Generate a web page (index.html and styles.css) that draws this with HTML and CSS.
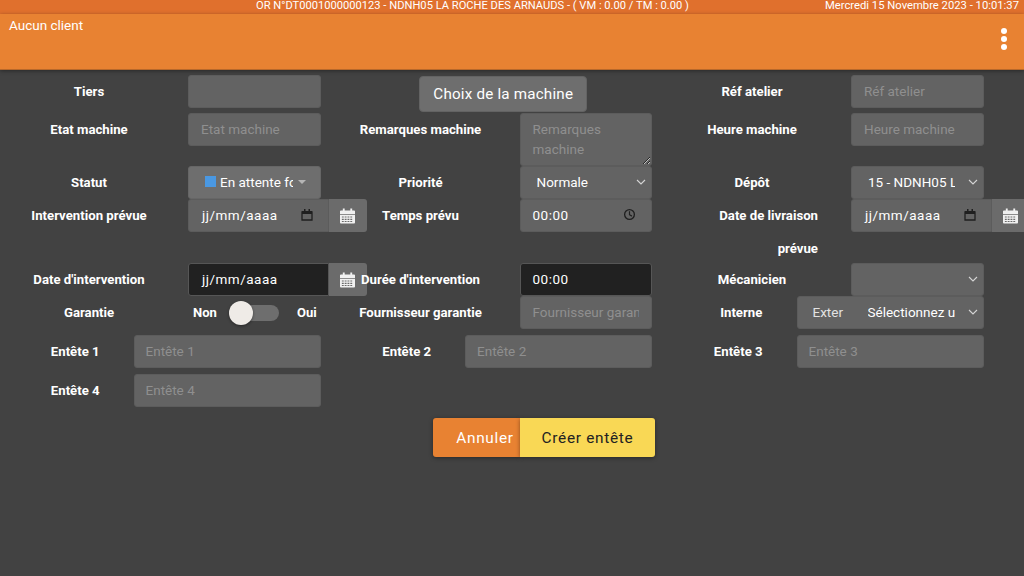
FILE: index.html
```html
<!DOCTYPE html>
<html lang="fr">
<head>
<meta charset="UTF-8">
<meta name="viewport" content="width=device-width, initial-scale=1.0">
<title>Création entête</title>
<link rel="stylesheet" href="styles.css">
</head>
<body>

<svg class="icon-defs" width="0" height="0">
    <symbol id="cal-solid" viewBox="0 0 16 16">
        <path fill="currentColor" d="M3 0h2v2h6V0h2v2h2a1 1 0 0 1 1 1v3H0V3a1 1 0 0 1 1-1h2zM0 7h16v8a1 1 0 0 1-1 1H1a1 1 0 0 1-1-1zm2 1.5v1.2h2V8.500zm3 0v1.2h2V8.500zm3 0v1.2h2V8.500zm3 0v1.2h2V8.500zM2 11v1.200h2V11zm3 0v1.200h2V11zm3 0v1.200h2V11zm3 0v1.200h2V11zM2 13.300v1.200h2v-1.200zm3 0v1.200h2v-1.200zm3 0v1.200h2v-1.200zm3 0v1.200h2v-1.200z" fill-rule="evenodd"/>
    </symbol>
    <symbol id="cal-line" viewBox="0 0 12 12">
        <path fill="none" stroke="currentColor" stroke-width="1.300" d="M1 3h10v8H1z"/>
        <path fill="currentColor" d="M1 2h10v3H1zM3 0h1.500v2H3zM7.500 0H9v2H7.500z"/>
    </symbol>
    <symbol id="chevron" viewBox="0 0 10 6">
        <path fill="none" stroke="currentColor" stroke-width="1.100" d="M1 1l4 4 4-4"/>
    </symbol>
</svg>

<div class="top-bar">
    <span class="top-title">OR N°DT0001000000123 - NDNH05 LA ROCHE DES ARNAUDS - ( VM : 0.00 / TM : 0.00 )</span>
    <span class="top-date">Mercredi 15 Novembre 2023 - 10:01:37</span>
</div>

<header class="app-bar">
    <span class="client">Aucun client</span>
    <div class="menu-dots"><i></i><i></i><i></i></div>
</header>

<main class="form">
    <div class="row row-first">
        <div class="field">
            <label class="label">Tiers</label>
            <input class="input" type="text">
        </div>
        <div class="field field-center">
            <button class="machine-button">Choix de la machine</button>
        </div>
        <div class="field">
            <label class="label">Réf atelier</label>
            <input class="input" type="text" placeholder="Réf atelier">
        </div>
    </div>

    <div class="row row-notes">
        <div class="field">
            <label class="label">Etat machine</label>
            <input class="input" type="text" placeholder="Etat machine">
        </div>
        <div class="field">
            <label class="label">Remarques machine</label>
            <textarea class="input textarea" placeholder="Remarques machine"></textarea>
        </div>
        <div class="field">
            <label class="label">Heure machine</label>
            <input class="input" type="text" placeholder="Heure machine">
        </div>
    </div>

    <div class="row">
        <div class="field">
            <label class="label">Statut</label>
            <div class="input status">
                <span class="status-square"></span>
                <span class="clip status-text">En attente fournisseur</span>
                <span class="caret"></span>
            </div>
        </div>
        <div class="field">
            <label class="label">Priorité</label>
            <div class="input select">
                <span class="clip select-text">Normale</span>
                <svg class="chevron"><use href="#chevron"/></svg>
            </div>
        </div>
        <div class="field">
            <label class="label">Dépôt</label>
            <div class="input select">
                <span class="clip select-text">15 - NDNH05 LA ROCHE DES ARNAUDS</span>
                <svg class="chevron"><use href="#chevron"/></svg>
            </div>
        </div>
    </div>

    <div class="row row-tall">
        <div class="field">
            <label class="label">Intervention prévue</label>
            <div class="date-group">
                <div class="input date-input">
                    <span class="date-text">jj/mm/aaaa</span>
                    <svg class="cal-line"><use href="#cal-line"/></svg>
                </div>
                <span class="date-addon"><svg class="cal-solid"><use href="#cal-solid"/></svg></span>
            </div>
        </div>
        <div class="field">
            <label class="label">Temps prévu</label>
            <div class="input time-input">
                <span class="date-text">00:00</span>
                <svg class="clock" viewBox="0 0 12 12">
                    <circle cx="6" cy="6" r="4.500" fill="none" stroke="currentColor" stroke-width="1.200"/>
                    <path d="M6 3v3.200l2.200 1.300" fill="none" stroke="currentColor" stroke-width="1.100"/>
                </svg>
            </div>
        </div>
        <div class="field">
            <label class="label label-right">Date de livraison prévue</label>
            <div class="date-group">
                <div class="input date-input">
                    <span class="date-text">jj/mm/aaaa</span>
                    <svg class="cal-line"><use href="#cal-line"/></svg>
                </div>
                <span class="date-addon"><svg class="cal-solid"><use href="#cal-solid"/></svg></span>
            </div>
        </div>
    </div>

    <div class="row">
        <div class="field">
            <label class="label">Date d'intervention</label>
            <div class="date-group">
                <div class="input date-input input-dark">
                    <span class="date-text">jj/mm/aaaa</span>
                </div>
                <span class="date-addon"><svg class="cal-solid"><use href="#cal-solid"/></svg></span>
            </div>
        </div>
        <div class="field">
            <label class="label label-over">Durée d'intervention</label>
            <div class="input time-input input-dark">
                <span class="date-text">00:00</span>
            </div>
        </div>
        <div class="field">
            <label class="label">Mécanicien</label>
            <div class="input select">
                <span class="clip select-text"></span>
                <svg class="chevron"><use href="#chevron"/></svg>
            </div>
        </div>
    </div>

    <div class="row row-gap">
        <div class="field">
            <label class="label">Garantie</label>
            <div class="switch-box">
                <span class="switch-text">Non</span>
                <span class="switch"><span class="switch-thumb"></span></span>
                <span class="switch-text switch-yes">Oui</span>
            </div>
        </div>
        <div class="field">
            <label class="label">Fournisseur garantie</label>
            <input class="input" type="text" placeholder="Fournisseur garantie">
        </div>
        <div class="field field-wide">
            <label class="label label-intern">Interne</label>
            <div class="input select intern">
                <span class="intern-text">Exter</span>
                <span class="clip select-text">Sélectionnez un mécanicien</span>
                <svg class="chevron"><use href="#chevron"/></svg>
            </div>
        </div>
    </div>

    <div class="row row-gap">
        <div class="field field-wide">
            <label class="label">Entête 1</label>
            <input class="input" type="text" placeholder="Entête 1">
        </div>
        <div class="field field-wide">
            <label class="label">Entête 2</label>
            <input class="input" type="text" placeholder="Entête 2">
        </div>
        <div class="field field-wide">
            <label class="label">Entête 3</label>
            <input class="input" type="text" placeholder="Entête 3">
        </div>
    </div>

    <div class="row">
        <div class="field field-wide">
            <label class="label">Entête 4</label>
            <input class="input" type="text" placeholder="Entête 4">
        </div>
    </div>

    <div class="actions">
        <button class="action-button cancel-button">Annuler</button>
        <button class="action-button create-button">Créer entête</button>
    </div>
</main>

</body>
</html>
```

FILE: styles.css
```css
* {
    box-sizing: border-box;
}
html, body {
    height: 100%;
}
body {
    margin: 0;
    overflow: hidden;
    background-color: #424242;
    color: #fff;
    font-family: Roboto, "Liberation Sans", sans-serif;
}
.icon-defs {
    display: block;
    height: 0;
}

/* header */
.top-bar {
    display: flex;
    justify-content: space-between;
    height: 14px;
    padding: 0 5px 0 256px;
    background-color: #e0702d;
    font-size: 11.150px;
    line-height: 12px;
    white-space: nowrap;
}
.top-date {
    font-size: 11.250px;
}
.app-bar {
    display: flex;
    justify-content: space-between;
    height: 56px;
    padding: 4px 17px 0 9px;
    background-color: #e88232;
    border-bottom: 1px solid #b8682a;
    box-shadow: 0 1px 4px rgba(0, 0, 0, 0.4);
    font-size: 13.500px;
    line-height: 15px;
}
.menu-dots {
    display: flex;
    flex-direction: column;
    gap: 2px;
    margin-top: 10px;
}
.menu-dots i {
    display: block;
    width: 6px;
    height: 6px;
    border-radius: 50%;
    background-color: #fff;
}

/* form rows */
.form {
    padding: 0 0 0 7px;
}
.row {
    display: flex;
    align-items: flex-start;
    height: 33px;
}
.row-first {
    height: 38px;
    margin-top: 5px;
}
.row-notes {
    height: 53px;
}
.row-tall {
    height: 64px;
}
.row-gap {
    height: 39px;
}
.field {
    display: flex;
    flex: 0 0 331.500px;
    min-width: 0;
    align-items: flex-start;
}
.field-center {
    justify-content: center;
    padding-right: 2px;
}
.label {
    position: relative;
    flex: 0 0 164px;
    margin-right: 17px;
    font-size: 13.200px;
    font-weight: 700;
    line-height: 33px;
    text-align: center;
}
.label-right {
    padding-left: 48px;
    padding-right: 16px;
    text-align: right;
}
.label-over {
    z-index: 1;
}
.field-wide .label {
    flex: 0 0 126.500px;
    margin-right: 0;
    padding-left: 10px;
}
.field-wide .label-intern {
    padding-left: 16px;
}

/* controls */
.input {
    display: flex;
    align-items: center;
    flex: 0 0 132.500px;
    width: 132.500px;
    height: 33px;
    padding: 0 12px 2px;
    border: 1px solid #5c5c5c;
    border-radius: 3px;
    outline: none;
    background-color: #636363;
    color: #fff;
    font-family: inherit;
    font-size: 13.500px;
}
.field-wide .input {
    flex: 0 0 187px;
    width: 187px;
    padding-left: 11px;
}
.input::placeholder {
    color: #8f8f8f;
    opacity: 1;
}
.input-dark {
    border-color: #565656;
    background-color: #212121;
}
.textarea {
    display: block;
    height: 53px;
    padding: 5px 12px;
    line-height: 20px;
}
.clip {
    display: block;
    overflow: hidden;
    white-space: nowrap;
}
.status {
    padding: 0 0 2px 16px;
    border-color: #666;
    background-color: #6e6e6e;
}
.status-square {
    flex: none;
    width: 11px;
    height: 11px;
    margin-right: 4px;
    background-color: #4a98e2;
}
.status-text {
    width: 73px;
}
.caret {
    width: 0;
    height: 0;
    margin-left: 5px;
    border-top: 4px solid #b5b5b5;
    border-left: 4px solid transparent;
    border-right: 4px solid transparent;
}
.select {
    justify-content: space-between;
    padding: 0 5px 2px 16px;
}
.select-text {
    width: 87px;
}
.chevron {
    flex: none;
    width: 10px;
    height: 6px;
    color: #d5d5d5;
}
.field-wide .intern {
    padding-left: 0;
}
.intern .select-text {
    margin-right: auto;
}
.intern-text {
    flex: none;
    width: 70px;
    padding-left: 15px;
    color: #e2e2e2;
}
.date-group {
    display: flex;
    flex: none;
    width: 179px;
    height: 33px;
}
.date-input {
    flex: 0 0 141px;
    width: 141px;
    justify-content: space-between;
    padding: 0 15px 2px 13px;
    border-radius: 3px 0 0 3px;
}
.date-text {
    letter-spacing: 0.5px;
}
.cal-line {
    flex: none;
    width: 12px;
    height: 12px;
    color: #1f1f1f;
}
.date-addon {
    display: flex;
    align-items: center;
    justify-content: center;
    flex: 1;
    padding-right: 2px;
    border-radius: 0 3px 3px 0;
    background-color: #6b6b6b;
}
.cal-solid {
    width: 15px;
    height: 16px;
    color: #f0f0f0;
}
.time-input {
    justify-content: space-between;
    padding: 0 15px 2px 12px;
}
.clock {
    flex: none;
    width: 13px;
    height: 13px;
    color: #1f1f1f;
}

/* garantie switch */
.switch-box {
    display: flex;
    align-items: center;
    height: 33px;
    font-size: 13px;
    font-weight: 700;
}
.switch-text {
    width: 36px;
    margin-left: 5px;
}
.switch-yes {
    margin-left: 18px;
    width: auto;
}
.switch {
    display: flex;
    align-items: center;
    width: 50px;
    height: 16px;
    border-radius: 8px;
    background-color: #6e6e6e;
}
.switch-thumb {
    width: 24px;
    height: 24px;
    border-radius: 50%;
    background-color: #efebe7;
    box-shadow: 0 1px 3px rgba(0, 0, 0, 0.4);
}

/* buttons */
.machine-button {
    width: 168px;
    height: 36px;
    margin-top: 1px;
    padding: 0;
    border: 1px solid #636363;
    border-radius: 4px;
    background-color: #6e6e6e;
    color: #fff;
    font-family: inherit;
    font-size: 15.200px;
    letter-spacing: 0.2px;
}
.actions {
    display: flex;
    margin-top: 11px;
    padding-left: 426px;
}
.action-button {
    height: 39px;
    padding: 0;
    border: none;
    font-family: inherit;
    font-size: 15.400px;
    letter-spacing: 0.7px;
    box-shadow: 0 1px 4px rgba(0, 0, 0, 0.4);
}
.cancel-button {
    width: 87px;
    padding-left: 17px;
    border-radius: 3px 0 0 3px;
    background-color: #e88232;
    color: #fff;
    text-align: center;
}
.create-button {
    width: 135px;
    border-radius: 0 3px 3px 0;
    background-color: #f9d855;
    color: #222;
}
```
